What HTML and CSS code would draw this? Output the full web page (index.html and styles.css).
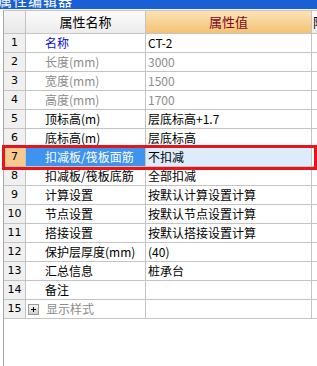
FILE: index.html
```html
<!DOCTYPE html>
<html>
<head>
<meta charset="utf-8">
<link rel="stylesheet" href="styles.css">
</head>
<body>
<div class="window">
  <div class="titlebar"><span class="title">属性编辑器</span></div>
  <div class="gap"></div>
  <div class="body">
    <div class="grid">
      <div class="c hnum"></div>
      <div class="c hname">属性名称</div>
      <div class="c hval">属性值</div>
      <div class="c hext">附加</div>

      <div class="c num">1</div><div class="c name blue">名称</div><div class="c val">CT-2</div><div class="c ext"></div>
      <div class="c num">2</div><div class="c name gray">长度(mm)</div><div class="c val gray">3000</div><div class="c ext"></div>
      <div class="c num">3</div><div class="c name gray">宽度(mm)</div><div class="c val gray">1500</div><div class="c ext"></div>
      <div class="c num">4</div><div class="c name gray">高度(mm)</div><div class="c val gray">1700</div><div class="c ext"></div>
      <div class="c num">5</div><div class="c name">顶标高(m)</div><div class="c val">层底标高+1.7</div><div class="c ext"></div>
      <div class="c num">6</div><div class="c name">底标高(m)</div><div class="c val">层底标高</div><div class="c ext"></div>
      <div class="c num sel">7</div><div class="c name selname">扣减板/筏板面筋</div><div class="c val selval">不扣减</div><div class="c ext"></div>
      <div class="c num">8</div><div class="c name">扣减板/筏板底筋</div><div class="c val">全部扣减</div><div class="c ext"></div>
      <div class="c num">9</div><div class="c name">计算设置</div><div class="c val">按默认计算设置计算</div><div class="c ext"></div>
      <div class="c num">10</div><div class="c name">节点设置</div><div class="c val">按默认节点设置计算</div><div class="c ext"></div>
      <div class="c num">11</div><div class="c name">搭接设置</div><div class="c val">按默认搭接设置计算</div><div class="c ext"></div>
      <div class="c num">12</div><div class="c name">保护层厚度(mm)</div><div class="c val">(40)</div><div class="c ext"></div>
      <div class="c num">13</div><div class="c name">汇总信息</div><div class="c val">桩承台</div><div class="c ext"></div>
      <div class="c num">14</div><div class="c name">备注</div><div class="c val"></div><div class="c ext"></div>
      <div class="c num">15</div><div class="c name grp"><span class="plus"></span><span class="gray">显示样式</span></div><div class="c val"></div><div class="c ext"></div>
    </div>
    <div class="highlight"></div>
  </div>
</div>
</body>
</html>
```

FILE: styles.css
```css
html, body {
  margin: 0;
  padding: 0;
  background: #ffffff;
  overflow: hidden;
}
body {
  width: 317px;
  height: 366px;
  font-family: "Noto Sans CJK SC", "Noto Sans", sans-serif;
  font-size: 12px;
  color: #000;
}
.window {
  width: 317px;
  height: 366px;
  overflow: hidden;
  display: flex;
  flex-direction: column;
}
.titlebar {
  height: 9px;
  flex: none;
  background: #1a5fd6;
  overflow: hidden;
  position: relative;
}
.title {
  display: block;
  color: #fff;
  font-size: 14px;
  line-height: 14px;
  margin-top: -7px;
  margin-left: -2px;
  letter-spacing: 1px;
}
.gap {
  height: 1px;
  flex: none;
  background: #f4f8fc;
}
.body {
  flex: 1;
  position: relative;
  margin-left: 3px;
  border-left: 1px solid #a8a8a8;
}
.grid {
  display: grid;
  grid-template-columns: 22px 120px 166px 20px;
  grid-template-rows: 23px;
  grid-auto-rows: 19px;
  border-top: 1px solid #c4c4c4;
  width: 340px;
}
.c {
  box-sizing: border-box;
  border-right: 1px solid #c4c4c4;
  border-bottom: 1px solid #c4c4c4;
  display: flex;
  align-items: center;
  white-space: nowrap;
  overflow: hidden;
  line-height: 18px;
}
.hnum {
  background: linear-gradient(#f6f6f6, #e8e8e8);
}
.hname {
  background: linear-gradient(#fbfbfb, #ececec);
  justify-content: center;
  font-size: 13px;
}
.hval {
  background: linear-gradient(#fbe3b8, #f5c272);
  justify-content: center;
  font-size: 13px;
  color: #7a0a1e;
}
.hext {
  background: linear-gradient(#fbfbfb, #ececec);
  font-size: 13px;
  padding-left: 1px;
}
.num {
  background: #f0f0f0;
  justify-content: center;
  font-family: "DejaVu Sans", sans-serif;
  font-size: 11px;
}
.name {
  padding-left: 19px;
}
.val {
  padding-left: 2px;
}
.blue { color: #0a10c8; }
.gray { color: #8c8c8c; }
.sel { background: #f8c98e; }
.selname { background: #3d93ee; color: #fff; }
.selval { background: #dcecfc; }
.grp {
  padding-left: 2px;
  gap: 7px;
}
.plus {
  width: 11px;
  height: 11px;
  box-sizing: border-box;
  border: 1px solid #9a9a9a;
  background: linear-gradient(#f4f4f4, #d0d0d0);
  position: relative;
  flex: none;
}
.plus::before, .plus::after {
  content: "";
  position: absolute;
  background: #000;
}
.plus::before {
  left: 2px;
  top: 4px;
  width: 5px;
  height: 1px;
}
.plus::after {
  left: 4px;
  top: 2px;
  width: 1px;
  height: 5px;
}
.highlight {
  position: absolute;
  left: -2px;
  top: 135px;
  width: 315px;
  height: 25px;
  box-sizing: border-box;
  border: 3px solid #e8141c;
  pointer-events: none;
}
```
